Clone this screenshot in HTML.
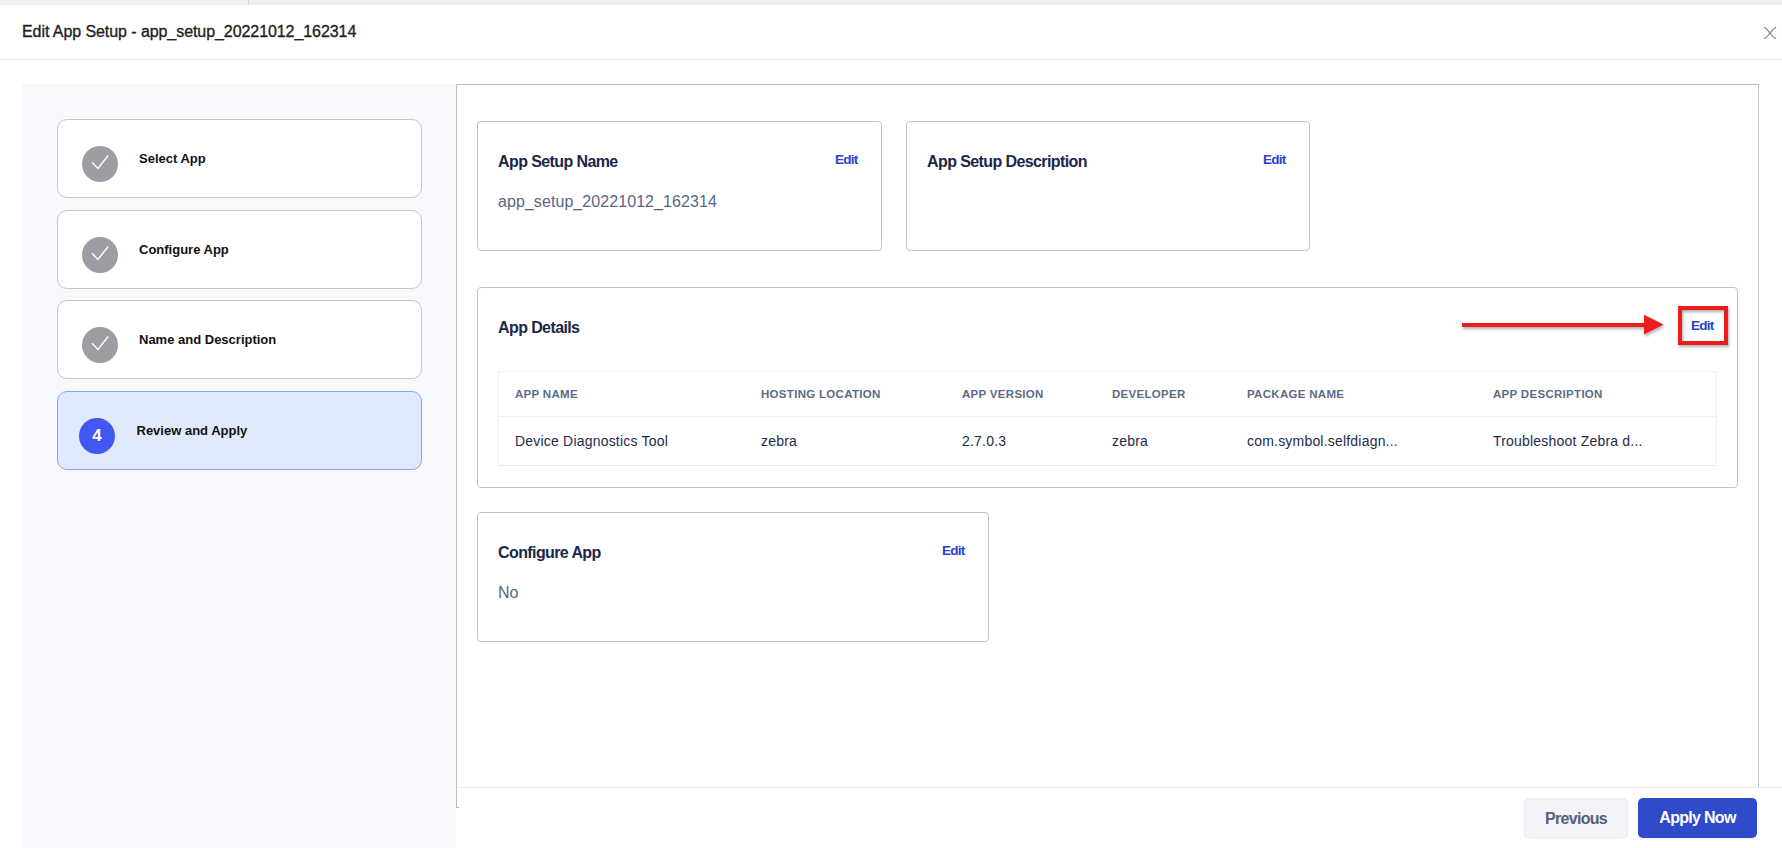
<!DOCTYPE html>
<html>
<head>
<meta charset="utf-8">
<style>
html,body{margin:0;padding:0;}
body{width:1782px;height:848px;position:relative;overflow:hidden;background:#fff;font-family:"Liberation Sans",sans-serif;}
.abs{position:absolute;}
.topstrip{left:0;top:0;width:1782px;height:5px;background:#ececef;}
.topstrip .l{position:absolute;left:0;top:0;width:248px;height:5px;background:#f2f2f2;}
.topstrip .d{position:absolute;left:248px;top:0;width:1px;height:5px;background:#d2d2dc;}
.title{left:22px;top:23px;font-size:16px;color:#1f1f1f;white-space:nowrap;line-height:18px;letter-spacing:-0.07px;-webkit-text-stroke:0.35px #1f1f1f;}
.hdrline{left:0;top:59px;width:1782px;height:1px;background:#e9edf4;}
.sidebar{left:22px;top:84px;width:434px;height:764px;background:#f8f9fc;}
.step{left:57px;width:363px;height:77px;border:1px solid #c6c6c6;border-radius:10px;background:#fff;}
.step.active{background:#e1eafc;border-color:#86a6ea;}
.circ{position:absolute;width:36px;height:36px;border-radius:50%;background:#9d9ea3;}
.circ.blue{background:#4158f5;color:#fff;font-weight:bold;font-size:17px;text-align:center;line-height:36px;}
.stxt{position:absolute;font-size:13px;font-weight:bold;color:#111;white-space:nowrap;line-height:15px;}
.panel{left:456px;top:84px;width:1301px;height:722px;border:1px solid #bdbdbd;border-right-color:#c4c4c4;background:#fff;}
.card{border:1px solid #c3c3c3;border-radius:4px;background:#fff;}
.ctitle{position:absolute;font-size:16px;font-weight:bold;color:#1a2748;white-space:nowrap;line-height:17px;letter-spacing:-0.6px;}
.edit{position:absolute;font-size:13.5px;font-weight:bold;color:#2b40cd;white-space:nowrap;line-height:14px;letter-spacing:-0.75px;}
.cval{position:absolute;font-size:16px;color:#59667f;white-space:nowrap;line-height:18px;letter-spacing:0.07px;}
.tbl{left:498px;top:371px;width:1217px;height:93px;border:1px solid #eef0f4;border-bottom-color:#e6eaf3;}
.th{position:absolute;font-size:11.5px;font-weight:bold;color:#5c6b85;white-space:nowrap;line-height:14px;top:387px;letter-spacing:0.3px;}
.td{position:absolute;font-size:14px;color:#1e2b4b;white-space:nowrap;line-height:16px;top:433px;letter-spacing:0.2px;}
.footer{left:459px;top:787px;width:1323px;height:61px;background:#fff;border-top:1px solid #e8ecf6;}
.btn{position:absolute;height:40px;border-radius:5px;font-size:16px;font-weight:bold;text-align:center;line-height:40px;box-sizing:border-box;letter-spacing:-0.7px;box-shadow:0 1px 2px rgba(0,0,0,0.06);}
</style>
</head>
<body>
<div class="abs topstrip"><div class="l"></div><div class="d"></div></div>
<div class="abs title">Edit App Setup - app_setup_20221012_162314</div>
<svg class="abs" style="left:1763px;top:26px" width="14" height="14" viewBox="-1 -1 14 14"><path d="M0.4 0.6 Q1.8 0.5 6 6 Q10.2 11.5 11.6 11.4 M11.6 0.6 Q10.2 0.5 6 6 Q1.8 11.5 0.4 11.4" stroke="#808080" stroke-width="1.2" fill="none" stroke-linecap="round"/></svg>
<div class="abs hdrline"></div>

<div class="abs sidebar"></div>

<div class="abs step" style="top:119px">
  <div class="circ" style="left:24px;top:26px"><svg width="36" height="36" viewBox="0 0 36 36"><path d="M10 16.2 L15.9 22.4 L26.2 9.5" stroke="#fff" stroke-width="1.4" fill="none"/></svg></div>
  <div class="stxt" style="left:81px;top:31px">Select App</div>
</div>
<div class="abs step" style="top:210px">
  <div class="circ" style="left:24px;top:26px"><svg width="36" height="36" viewBox="0 0 36 36"><path d="M10 16.2 L15.9 22.4 L26.2 9.5" stroke="#fff" stroke-width="1.4" fill="none"/></svg></div>
  <div class="stxt" style="left:81px;top:31px">Configure App</div>
</div>
<div class="abs step" style="top:300px">
  <div class="circ" style="left:24px;top:26px"><svg width="36" height="36" viewBox="0 0 36 36"><path d="M10 16.2 L15.9 22.4 L26.2 9.5" stroke="#fff" stroke-width="1.4" fill="none"/></svg></div>
  <div class="stxt" style="left:81px;top:31px">Name and Description</div>
</div>
<div class="abs step active" style="top:391px">
  <div class="circ blue" style="left:21px;top:26px">4</div>
  <div class="stxt" style="left:78.5px;top:31px">Review and Apply</div>
</div>

<div class="abs panel"></div>

<!-- card 1 -->
<div class="abs card" style="left:477px;top:121px;width:403px;height:128px"></div>
<div class="ctitle" style="left:498px;top:153px">App Setup Name</div>
<div class="edit" style="left:835px;top:153px">Edit</div>
<div class="cval" style="left:498px;top:193px">app_setup_20221012_162314</div>

<!-- card 2 -->
<div class="abs card" style="left:906px;top:121px;width:402px;height:128px"></div>
<div class="ctitle" style="left:927px;top:153px">App Setup Description</div>
<div class="edit" style="left:1263px;top:153px">Edit</div>

<!-- card app details -->
<div class="abs card" style="left:477px;top:287px;width:1259px;height:199px"></div>
<div class="ctitle" style="left:498px;top:319px">App Details</div>
<div class="abs tbl"></div>
<div class="abs" style="left:499px;top:416px;width:1217px;height:1px;background:#eef0f5"></div>
<div class="th" style="left:515px">APP NAME</div>
<div class="th" style="left:761px">HOSTING LOCATION</div>
<div class="th" style="left:962px">APP VERSION</div>
<div class="th" style="left:1112px">DEVELOPER</div>
<div class="th" style="left:1247px">PACKAGE NAME</div>
<div class="th" style="left:1493px">APP DESCRIPTION</div>
<div class="td" style="left:515px">Device Diagnostics Tool</div>
<div class="td" style="left:761px">zebra</div>
<div class="td" style="left:962px">2.7.0.3</div>
<div class="td" style="left:1112px">zebra</div>
<div class="td" style="left:1247px">com.symbol.selfdiagn...</div>
<div class="td" style="left:1493px">Troubleshoot Zebra d...</div>

<!-- arrow + red box -->
<svg class="abs" style="left:1450px;top:295px" width="300" height="60" viewBox="0 0 300 60">
  <defs><filter id="sh" x="-10%" y="-50%" width="120%" height="200%"><feGaussianBlur in="SourceAlpha" stdDeviation="1.5"/><feOffset dx="1" dy="2" result="o"/><feFlood flood-color="#5a6a70" flood-opacity="0.55"/><feComposite in2="o" operator="in"/><feMerge><feMergeNode/><feMergeNode in="SourceGraphic"/></feMerge></filter></defs>
  <g filter="url(#sh)">
    <rect x="12" y="28" width="184" height="4" fill="#ee1b1b"/>
    <path d="M194 19.7 L213.6 29.6 L194 39.5 Z" fill="#ee1b1b"/>
    <rect x="230" y="13" width="46" height="35" fill="none" stroke="#ee1b1b" stroke-width="4"/>
  </g>
</svg>
<div class="edit" style="left:1691px;top:319px">Edit</div>

<!-- configure app card -->
<div class="abs card" style="left:477px;top:512px;width:510px;height:128px"></div>
<div class="ctitle" style="left:498px;top:544px">Configure App</div>
<div class="edit" style="left:942px;top:544px">Edit</div>
<div class="cval" style="left:498px;top:584px">No</div>

<!-- footer -->
<div class="abs footer"></div>
<div class="btn" style="left:1524px;top:798px;width:104px;background:#f2f4f7;border:1px solid #e9edf5;color:#546079">Previous</div>
<div class="btn" style="left:1638px;top:798px;width:119px;background:#2f4bcc;color:#fff">Apply Now</div>

</body>
</html>
